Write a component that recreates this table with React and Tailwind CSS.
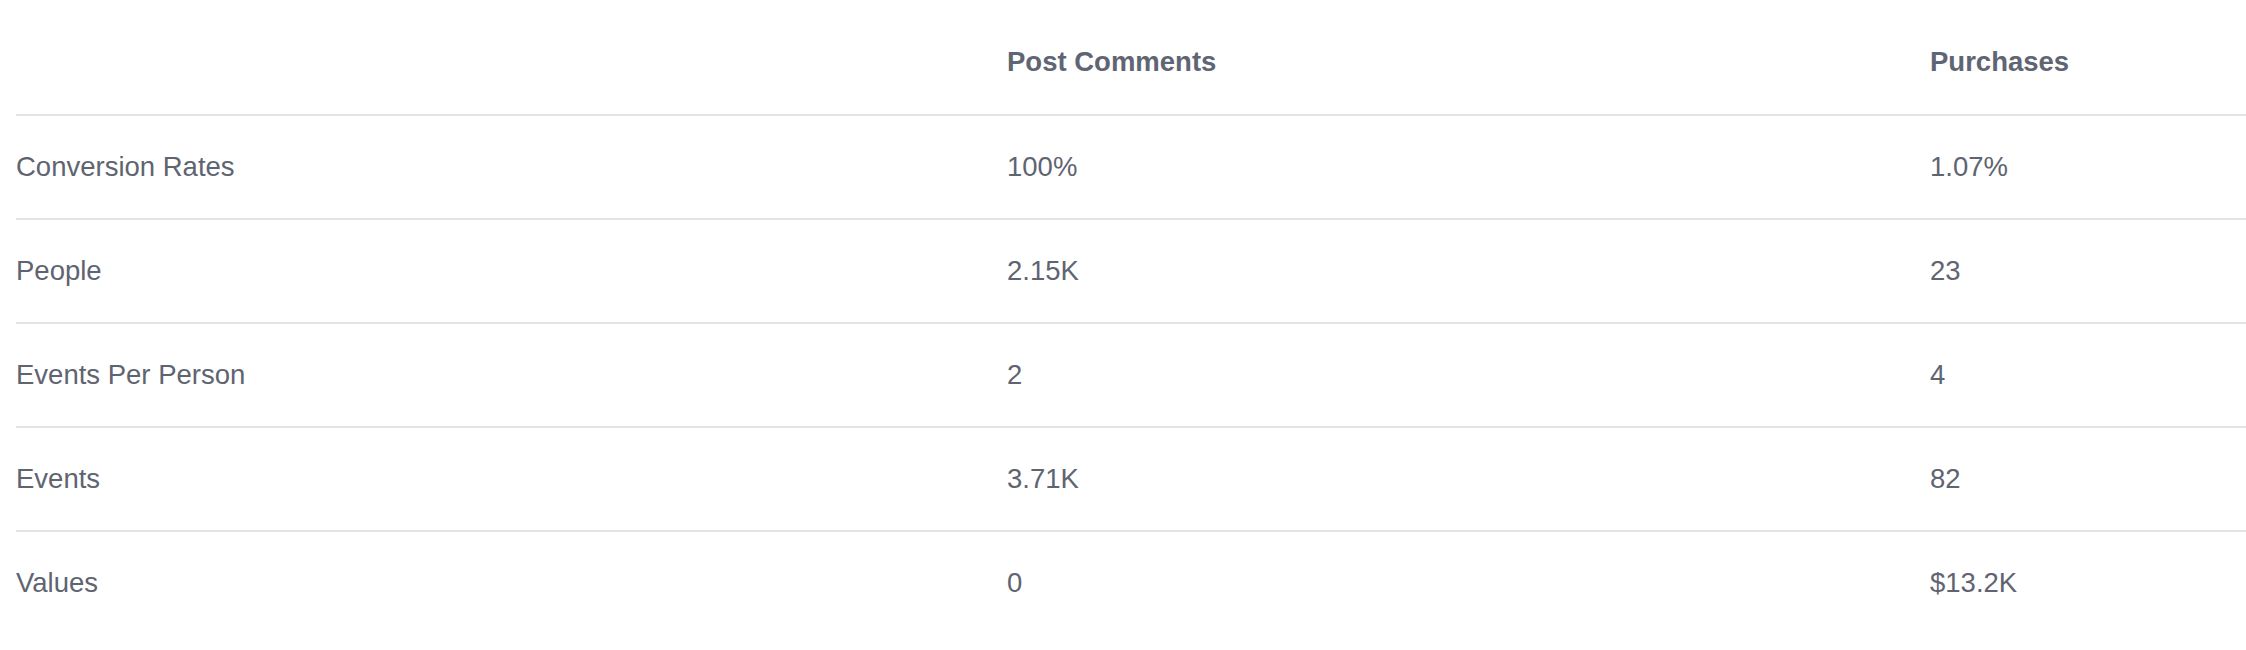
import React from 'react'

const columns = ['Post Comments', 'Purchases']

const rows = [
  { label: 'Conversion Rates', values: ['100%', '1.07%'] },
  { label: 'People', values: ['2.15K', '23'] },
  { label: 'Events Per Person', values: ['2', '4'] },
  { label: 'Events', values: ['3.71K', '82'] },
  { label: 'Values', values: ['0', '$13.2K'] },
]

export default function App() {
  return (
    <div className="min-h-[650px] bg-white pl-4 font-['Liberation_Sans',Arial,sans-serif] text-[27.5px] text-[#5f6471]">
      <div className="grid h-[114px] grid-cols-[991px_923px_1fr] items-center pt-[10px] font-bold text-[#606574]">
        <div />
        {columns.map((col) => (
          <div key={col}>{col}</div>
        ))}
      </div>
      {rows.map((row) => (
        <div
          key={row.label}
          className="grid h-[104px] grid-cols-[991px_923px_1fr] items-center border-t-2 border-[#e4e4e4]"
        >
          <div>{row.label}</div>
          {row.values.map((v, i) => (
            <div key={i}>{v}</div>
          ))}
        </div>
      ))}
    </div>
  )
}
